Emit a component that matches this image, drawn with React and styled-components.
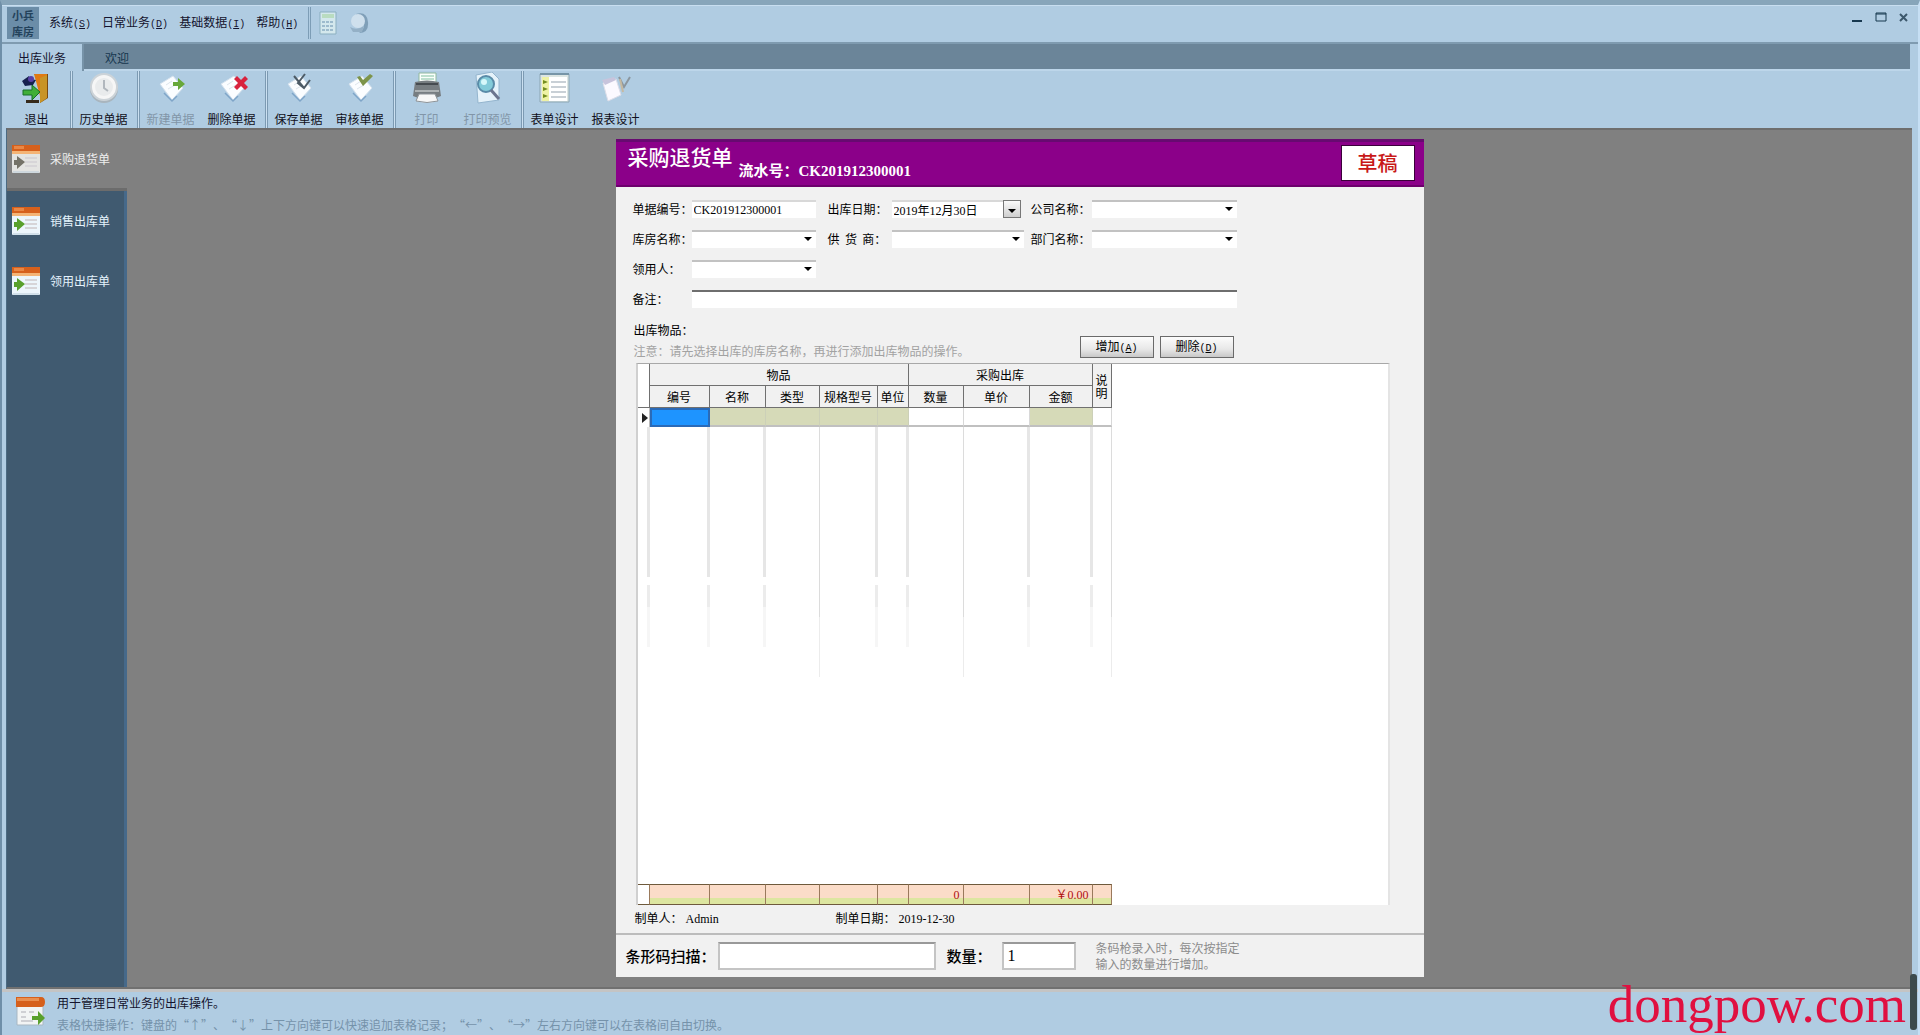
import styled, { createGlobalStyle, css } from 'styled-components';

const cores = {
  frame: '#b0cce2',
  frameDark: '#6b8599',
  side: '#405a70',
  work: '#808080',
  purple: '#8b0089',
  sheet: '#f1f1f1',
  readonly: '#d6dab8',
};

const GlobalStyle = createGlobalStyle`
  * { box-sizing: border-box; }

  body {
    margin: 0;
    font-family: "Noto Sans CJK SC", sans-serif;
    font-size: 12px;
    line-height: 14px;
    color: #000;
    text-spacing-trim: space-all;
  }

  button, input, select {
    font: inherit;
    color: inherit;
    margin: 0;
  }
`;

const Window = styled.div`
  height: 100vh;
  min-height: 700px;
  display: flex;
  flex-direction: column;
  position: relative;
  background: ${cores.frame};
  border-top: 5px solid #87a5ba;
  border-left: 2px solid #6f8fa8;
  border-right: 2px solid #c6dff4;
  overflow: hidden;
`;

const TitleBar = styled.header`
  height: 39px;
  display: flex;
  align-items: center;
  padding: 0 7px 2px 5px;
  border-top: 1px solid #c8def0;
  border-bottom: 2px solid #7f9bb0;
`;

const Logo = styled.div`
  width: 32px;
  height: 32px;
  margin-right: 10px;
  background: #6b8da8;
  color: #24435c;
  font-size: 11px;
  line-height: 16px;
  font-weight: 700;
  text-align: center;
`;

const Menu = styled.nav`
  display: flex;
  gap: 11px;
`;

const MenuButton = styled.button`
  border: none;
  background: none;
  padding: 0;
  color: #14142e;
  cursor: pointer;
`;

const Key = styled.span`
  font-family: "Liberation Mono", monospace;
  font-size: 10px;

  u { text-underline-offset: 1px; }
`;

const MenuTools = styled.div`
  display: flex;
  align-items: center;
  gap: 11px;
  margin-left: 10px;
  padding-left: 8px;
  height: 32px;
  border-left: 3px double #7d9db6;
`;

const IconButton = styled.button`
  border: none;
  background: none;
  padding: 0;
  display: flex;
  cursor: pointer;
`;

const WindowButtons = styled.div`
  display: flex;
  gap: 8px;
  margin-left: auto;
  padding-bottom: 12px;
`;

const TabBar = styled.div`
  height: 27px;
  display: flex;
  background: ${cores.frameDark};
  border-bottom: 2px solid #bdd6ea;
  margin-right: 8px;
`;

const Tab = styled.button`
  border: none;
  background: none;
  padding: 0 16px;
  margin-bottom: -2px;
  color: #16364e;
  cursor: pointer;

  ${(props) => props.$active && css`
    background: ${cores.frame};
    color: #14142e;
    margin-right: 5px;
    border-right: 2px solid #7793a8;
  `}
`;

const ToolBar = styled.div`
  height: 57px;
  display: flex;
  padding-left: 4px;
`;

const ToolGroup = styled.div`
  display: flex;
  padding-right: 3px;
  margin-right: 3px;

  &:not(:last-child) {
    box-shadow: 1px 0 0 #7c9ab2, 2px 0 0 #cbe0f1, 3px 0 0 #7c9ab2;
  }
`;

const ToolButton = styled.button`
  width: 61px;
  height: 57px;
  border: none;
  background: none;
  padding: 1px 0 0;
  display: flex;
  flex-direction: column;
  align-items: center;
  gap: 8px;
  color: #101020;
  cursor: pointer;

  &:disabled { color: #8296a8; }
`;

const Body = styled.div`
  flex: 1;
  min-height: 0;
  display: flex;
  margin: 0 6px 0 4px;
  background: ${cores.work};
  border-top: 2px solid #6e6e6e;
  border-bottom: 2px solid #707070;
  border-left: 1px solid #4b6a82;
`;

const SideBar = styled.aside`
  width: 120px;
  background: ${cores.side};
  border-right: 3px solid #46698a;
`;

const SideItem = styled.button`
  width: 100%;
  height: 60px;
  border: none;
  background: none;
  padding: 0 0 0 4px;
  display: flex;
  align-items: center;
  gap: 9px;
  color: #e4f2fc;
  white-space: nowrap;
  cursor: pointer;

  ${(props) => props.$active && css`
    width: 120px;
    height: 61px;
    background: ${cores.work};
    color: #eee;
    border-bottom: 3px solid #6c6c6c;
  `}
`;

const Work = styled.main`
  flex: 1;
  display: flex;
  justify-content: center;
  padding: 9px 0 10px;
`;

const Sheet = styled.form`
  width: 808px;
  display: flex;
  flex-direction: column;
  background: ${cores.sheet};
`;

const SheetHeader = styled.div`
  height: 48px;
  display: flex;
  background: ${cores.purple};
  border-top: 3px solid #670a70;
  border-bottom: 2px solid #6c006c;
  color: #fff;
  padding: 3px 9px 0 12px;
`;

const SheetTitle = styled.h1`
  margin: 0;
  font-size: 21px;
  line-height: 22px;
  font-weight: 500;
`;

const Serial = styled.div`
  padding: 17px 0 0 6px;
  font-family: "Liberation Serif", "Noto Sans CJK SC", serif;
  font-size: 15px;
  line-height: 18px;
  font-weight: 700;
`;

const Draft = styled.div`
  width: 74px;
  height: 36px;
  margin-left: auto;
  border: 1px solid #3a003a;
  background: #fff;
  color: #c81818;
  font-size: 20px;
  line-height: 34px;
  font-weight: 500;
  text-align: center;
`;

const Fields = styled.div`
  display: grid;
  grid-template-columns: 59px 124px 12px 64px 132px 7px 61px 145px;
  grid-auto-rows: 30px;
  align-items: center;
  padding: 7px 17px 0;
`;

const Label = styled.label`
  grid-column: ${(props) => props.$col};
  white-space: pre;
`;

const inputBox = css`
  width: 100%;
  height: 18px;
  border: none;
  border-top: 2px solid #c2c2c2;
  border-radius: 0;
  background: #fff;
  outline: none;
`;

const Input = styled.input`
  ${inputBox};
  grid-column: ${(props) => props.$col};
  padding: 0 2px;
  font-family: "Liberation Serif", "Noto Sans CJK SC", serif;
  border-top-color: ${(props) => (props.$dark ? '#6e6e6e' : '#d8d8d8')};
`;

const ComboBox = styled.div`
  grid-column: ${(props) => props.$col};
  display: grid;
  align-items: center;

  > * { grid-area: 1 / 1; }

  svg {
    justify-self: end;
    margin-right: 4px;
    pointer-events: none;
  }
`;

const Select = styled.select`
  ${inputBox};
  appearance: none;
`;

const DateBox = styled.div`
  display: flex;
  padding-right: 3px;
`;

const DateButton = styled.button`
  width: 18px;
  height: 18px;
  flex: none;
  border: 1px solid #777;
  background: linear-gradient(#fafafa, #cfcfcf);
  padding: 3px 0 0;
  display: flex;
  align-items: center;
  justify-content: center;
`;

const ItemsBar = styled.div`
  height: 49px;
  display: flex;
  justify-content: space-between;
  align-items: flex-end;
  padding: 0 190px 5px 18px;
`;

const ItemsTitle = styled.div`
  display: flex;
  flex-direction: column;
  gap: 7px;

  p {
    margin: 0;
    color: #a2a2a2;
  }
`;

const Actions = styled.div`
  display: flex;
  gap: 6px;
`;

const ActionButton = styled.button`
  width: 74px;
  height: 22px;
  padding: 0;
  border: 1px solid #6a6a6a;
  background: linear-gradient(#fcfcfc, #e8e8e8 60%, #c8c8c8);
  cursor: pointer;
`;

const GridPanel = styled.div`
  flex: 1;
  min-height: 0;
  margin: 0 34px 0 20px;
  background: #fff;
  border-left: 2px solid #d0d0d0;
  border-right: 2px solid #e4e4e4;
  border-top: 1px solid #a8a8a8;
`;

const Grid = styled.table`
  width: 474px;
  height: 100%;
  table-layout: fixed;
  border-collapse: separate;
  border-spacing: 0;

  th, td {
    padding: 0;
    font-weight: 400;
    white-space: nowrap;
  }

  th {
    height: 22px;
    background: #f1f1f1;
    border-right: 1px solid #707070;
    border-bottom: 1px solid #707070;
    text-align: center;
  }

  th:first-child[rowspan] { background: #fff; }
`;

const NoteHead = styled.span`
  display: block;
  width: 12px;
  margin: 0 auto;
  line-height: 13px;
  white-space: normal;
`;

const Cell = styled.td`
  height: 19px;
  background: ${(props) => (props.$readonly ? cores.readonly : '#fff')};
  border-right: 1px solid ${(props) => (props.$readonly ? '#ccd0b8' : '#d8d8d8')};
  border-bottom: 2px solid #c0c0c0;

  ${(props) => props.$selected && css`
    background: #1e94ff;
    border: 2px solid #2a6ab8;
  `}
`;

const Mark = styled.td`
  border-right: 1px solid #bbb;

  svg { display: block; margin-left: 4px; }
`;

// coluna vazia: a linha da grade some antes do fim
const EmptyCell = styled.td`
  background: linear-gradient(#e6e6e6 0 150px, #fff 150px 158px, #ececec 158px 180px, #f6f6f6 180px 220px, #fff 220px) right / 3px 100% no-repeat;

  ${(props) => props.$long && css`
    background: linear-gradient(#dcdcdc 0 190px, #ececec 190px 250px, #fff 250px) right / 1px 100% no-repeat;
  `}
`;

const Total = styled.td`
  height: 21px;
  border-top: 1px solid #6e5a3c;
  border-bottom: 1px solid #6e5a3c;
  border-right: 1px solid #9a7a5c;
  background: linear-gradient(#fbdcc8 0 13px, #dde6a0 13px);
  color: #b01010;
  text-align: right;
  font-family: "Liberation Serif", "Noto Sans CJK SC", serif;

  && { padding-right: 3px; }

  ${(props) => props.$blank && css`background: #fff;`}
`;

const Author = styled.div`
  height: 28px;
  display: flex;
  align-items: center;
  padding: 0 19px;
  font-family: "Liberation Serif", "Noto Sans CJK SC", serif;

  span { width: 201px; }
`;

const ScanBar = styled.div`
  height: 44px;
  display: flex;
  align-items: center;
  padding: 0 10px;
  border-top: 2px solid #bcbcbc;
  font-size: 15px;

  label { font-weight: 500; white-space: nowrap; }

  p {
    margin: 0 0 0 20px;
    color: #8c8c8c;
    font-size: 12px;
    line-height: 16px;
  }
`;

const ScanInput = styled.input`
  width: ${(props) => props.$width}px;
  height: 28px;
  padding: 0 4px;
  margin: 0 11px 0 2px;
  border: 2px solid #c4c4c4;
  border-top-color: #999;
  background: #fff;
  font-family: "Liberation Serif", serif;
  font-size: 16px;

  &:last-of-type { margin: 0 0 0 10px; }
`;

const StatusBar = styled.footer`
  height: 46px;
  display: flex;
  gap: 11px;
  padding: 3px 0 0 12px;
  border-top: 3px solid #c4c4c4;
  color: #14142e;

  p { margin: 0; line-height: 22px; white-space: nowrap; }
  p:first-child { margin-top: -3px; }
  p:last-child { color: #7592aa; }
`;

const WaterMark = styled.div`
  position: absolute;
  right: 12px;
  bottom: 5px;
  font-family: "Liberation Serif", serif;
  font-size: 53px;
  line-height: 52px;
  color: #e01040;
`;

const ScrollMark = styled.div`
  position: absolute;
  right: 1px;
  bottom: 5px;
  width: 7px;
  height: 56px;
  border-radius: 3px;
  background: #3c4a4c;
`;

const Arrow = () => (
  <svg width="8" height="4" viewBox="0 0 8 4"><path d="M0 0h8L4 4z" fill="#000" /></svg>
);

const Note = () => (
  <>
    <path d="M5 12l13-8 10 12-11 12z" fill="#fbfdff" stroke="#d5e2ee" />
    <path d="M9 21l8 8 5-5" fill="none" stroke="#7fa5c8" strokeWidth="1.5" />
    <path d="M11 13l6-4M13 17l7-4" stroke="#dde5ec" />
  </>
);

const icons = {
  exit: (
    <>
      <path d="M13 2h14v24l-8 5V8z" fill="#7b4a10" />
      <path d="M13 2h13v22h-7z" fill="#e07a12" />
      <path d="M19 6l7-3v23l-7 5z" fill="#c89426" />
      <path d="M1 9l7-5 1 3 6 1-3 5-8 1z" fill="#17204e" />
      <circle cx="10" cy="7" r="3" fill="#5740a6" />
      <path d="M2 18h9v-5l8 7-8 8v-5H2z" fill="#40ae38" stroke="#176e28" />
      <path d="M5 28h13v3H5z" fill="#352a1c" />
    </>
  ),
  history: (
    <>
      <circle cx="16" cy="17" r="14" fill="#a9b5be" />
      <circle cx="16" cy="15" r="13" fill="#f6f6f6" stroke="#ccd3d8" strokeWidth="2" />
      <circle cx="16" cy="15" r="9" fill="#e9ebec" />
      <path d="M16 8v8l4 3" fill="none" stroke="#b1b7bd" strokeWidth="2" />
    </>
  ),
  add: (
    <>
      <Note />
      <path d="M18 10h5V6l7 6-7 6v-4h-5z" fill="#68a83a" />
    </>
  ),
  remove: (
    <>
      <Note />
      <path d="M18 7l3-3 4 4 4-4 3 3-4 4 4 4-3 3-4-4-4 4-3-3 4-4z" fill="#d8233e" />
    </>
  ),
  save: (
    <>
      <Note />
      <path d="M11 4l10 12M22 2l-7 9 6 5 6-8" fill="none" stroke="#4d5b66" strokeWidth="2" />
    </>
  ),
  check: (
    <>
      <Note />
      <path d="M13 5l6 9L29 4l-3-2-7 6-3-4z" fill="#7d9449" />
    </>
  ),
  print: (
    <>
      <path d="M8 1h17v11H8z" fill="#fafffb" stroke="#90b89e" />
      <path d="M10 4h13M10 7h13" stroke="#81bfa0" />
      <path d="M4 10q12-3 24 0l2 14q-14 7-28 0z" fill="#777d81" />
      <path d="M5 12h22" stroke="#464b50" strokeWidth="2" />
      <path d="M4 19h24" stroke="#adb2b4" strokeWidth="2" />
      <path d="M8 22h16l3 7q-11 3-22 0z" fill="#f7f7f7" stroke="#8d9398" />
    </>
  ),
  preview: (
    <>
      <path d="M4 3l16-3 7 7v21L6 31z" fill="#e5f2fa" stroke="#94b5ce" />
      <circle cx="14" cy="12" r="8" fill="#83cbd9" stroke="#598ba8" strokeWidth="2" />
      <circle cx="12" cy="10" r="3" fill="#d6f8fa" />
      <path d="M19 18l8 9" stroke="#6b758e" strokeWidth="3" />
    </>
  ),
  form: (
    <>
      <path d="M1 2h29v28H1z" fill="#dce5e3" stroke="#8ca6b4" />
      <path d="M3 5h25v24H3z" fill="#fff" />
      <path d="M3 5h7v24H3z" fill="#eef2a5" />
      <path d="M12 10h15M12 15h15M12 20h15M12 25h15" stroke="#c9d0d6" strokeWidth="2" />
      <path d="M4 8l5 2-5 2zM4 15l5 2-5 2zM4 22l5 2-5 2z" fill="#738c20" />
      <path d="M1 2h29" stroke="#7795a7" strokeWidth="2" />
    </>
  ),
  report: (
    <>
      <path d="M3 11l13-4 5 16-13 6z" fill="#fbf9ff" stroke="#dcdde8" />
      <path d="M2 8l12-3 2 3-11 5z" fill="#c8c4dc" />
      <path d="M19 5l5 10 6-10" fill="none" stroke="#8b969f" strokeWidth="2" />
      <path d="M20 7l3 13" stroke="#c6b9a0" strokeWidth="2" />
    </>
  ),
};

const ToolIcon = ({ name }) => (
  <svg width="32" height="32" viewBox="0 0 32 32">{icons[name]}</svg>
);

const DocIcon = ({ gray }) => (
  <svg width="30" height="30" viewBox="0 0 30 30">
    <rect x="1" y="1" width="28" height="28" rx="1" fill={gray ? '#e4e4e2' : '#edf6fc'} />
    <path d="M1 1h28v7H1z" fill="#d6601c" />
    <path d="M1 7h28v3H1z" fill="#f4b476" />
    <path d="M3 2h10v3H3z" fill="#e98745" />
    <path d="M14 14h12M14 18h12M14 22h12" stroke="#d7d5d8" strokeWidth="2" />
    <path d="M3 16h3v-4l8 6-8 7v-4H3z" fill={gray ? '#747268' : '#59a02c'} />
    <path d="M2 28h26" stroke="#b8cbd9" />
  </svg>
);

const StatusIcon = () => (
  <svg width="32" height="34" viewBox="0 0 32 34">
    <path d="M3 3h26v27H3z" fill="#f2f4f4" stroke="#a8b7c2" />
    <path d="M2 2h25q4 0 4 5t-4 5H2z" fill="#d6601c" />
    <path d="M3 3h22v3H3z" fill="#ea8f50" />
    <path d="M7 17h5M15 17h5M7 22h5M7 26h12" stroke="#cfd0d4" strokeWidth="2" />
    <path d="M18 21h6v-5l7 7-7 7v-5h-6z" fill="#59a02c" />
  </svg>
);

const menus = [
  ['系统', 'S'],
  ['日常业务', 'D'],
  ['基础数据', 'I'],
  ['帮助', 'H'],
];

const toolGroups = [
  [['退出', 'exit']],
  [['历史单据', 'history']],
  [['新建单据', 'add', true], ['删除单据', 'remove']],
  [['保存单据', 'save'], ['审核单据', 'check']],
  [['打印', 'print', true], ['打印预览', 'preview', true]],
  [['表单设计', 'form'], ['报表设计', 'report']],
];

const sideItems = ['采购退货单', '销售出库单', '领用出库单'];

const columns = [
  { title: '编号', width: 60, selected: true },
  { title: '名称', width: 56, readonly: true },
  { title: '类型', width: 54, readonly: true, long: true },
  { title: '规格型号', width: 58, readonly: true },
  { title: '单位', width: 31, readonly: true },
  { title: '数量', width: 55, total: '0', long: true },
  { title: '单价', width: 66 },
  { title: '金额', width: 63, readonly: true, total: '￥0.00' },
];

const Hotkey = ({ k }) => <Key>(<u>{k}</u>)</Key>;

const Combo = ({ id, label, col }) => (
  <>
    <Label htmlFor={id} $col={col}>{label}</Label>
    <ComboBox $col={col + 1}>
      <Select id={id} />
      <Arrow />
    </ComboBox>
  </>
);

const ItemsGrid = () => (
  <Grid>
    <colgroup>
      <col style={{ width: 12 }} />
      {columns.map((c) => <col key={c.title} style={{ width: c.width }} />)}
      <col />
    </colgroup>
    <thead>
      <tr>
        <th rowSpan={2} />
        <th colSpan={5}>物品</th>
        <th colSpan={3}>采购出库</th>
        <th rowSpan={2}><NoteHead>说明</NoteHead></th>
      </tr>
      <tr>
        {columns.map((c) => <th key={c.title}>{c.title}</th>)}
      </tr>
    </thead>
    <tbody>
      <tr>
        <Mark><svg width="6" height="10" viewBox="0 0 6 10"><path d="M0 0l6 5-6 5z" fill="#222" /></svg></Mark>
        {columns.map((c) => <Cell key={c.title} $readonly={c.readonly} $selected={c.selected} />)}
        <Cell />
      </tr>
      <tr>
        <EmptyCell />
        {columns.map((c) => <EmptyCell key={c.title} $long={c.long} />)}
        <EmptyCell $long />
      </tr>
    </tbody>
    <tfoot>
      <tr>
        <Total $blank />
        {columns.map((c) => <Total key={c.title}>{c.total}</Total>)}
        <Total />
      </tr>
    </tfoot>
  </Grid>
);

const App = () => {
  return (
    <Window>
      <GlobalStyle />

      <TitleBar>
        <Logo>小兵<br />库房</Logo>
        <Menu>
          {menus.map(([name, key]) => (
            <MenuButton key={key}>{name}<Hotkey k={key} /></MenuButton>
          ))}
        </Menu>
        <MenuTools>
          <IconButton aria-label="计算器">
            <svg width="18" height="24" viewBox="0 0 18 24">
              <path d="M1 1h16v22H1z" fill="#d4e8ed" stroke="#8bafc0" />
              <path d="M3 3h12v4H3z" fill="#b9dcc0" />
              <path d="M3 11h12M3 15h12M3 19h12" stroke="#9dbbcd" strokeWidth="2" strokeDasharray="3 1" />
            </svg>
          </IconButton>
          <IconButton aria-label="注销">
            <svg width="22" height="22" viewBox="0 0 22 22">
              <path d="M8 2q11-3 12 8t-9 11q7-5 4-10T8 2z" fill="#7f9fb8" />
              <circle cx="10" cy="9" r="7" fill="#cfe0ed" />
              <path d="M2 15q7 4 14-1l-2 6H5z" fill="#94b0c6" />
            </svg>
          </IconButton>
        </MenuTools>
        <WindowButtons>
          <IconButton aria-label="最小化">
            <svg width="16" height="12"><path d="M3 10h10" stroke="#17384f" strokeWidth="2" /></svg>
          </IconButton>
          <IconButton aria-label="最大化">
            <svg width="16" height="12"><path d="M3 2h10v8H3zM3 3h10" fill="none" stroke="#17384f" strokeWidth="1" /></svg>
          </IconButton>
          <IconButton aria-label="关闭">
            <svg width="14" height="12"><path d="M3 3l7 7M10 3l-7 7" stroke="#3c586c" strokeWidth="2" /></svg>
          </IconButton>
        </WindowButtons>
      </TitleBar>

      <TabBar>
        <Tab $active>出库业务</Tab>
        <Tab>欢迎</Tab>
      </TabBar>

      <ToolBar>
        {toolGroups.map((group, index) => (
          <ToolGroup key={index}>
            {group.map(([name, icon, disabled]) => (
              <ToolButton key={name} disabled={disabled}>
                <ToolIcon name={icon} />
                {name}
              </ToolButton>
            ))}
          </ToolGroup>
        ))}
      </ToolBar>

      <Body>
        <SideBar>
          {sideItems.map((name, index) => (
            <SideItem key={name} $active={index === 0}>
              <DocIcon gray={index === 0} />
              {name}
            </SideItem>
          ))}
        </SideBar>

        <Work>
          <Sheet onSubmit={(e) => e.preventDefault()}>
            <SheetHeader>
              <SheetTitle>采购退货单</SheetTitle>
              <Serial>流水号：CK201912300001</Serial>
              <Draft>草稿</Draft>
            </SheetHeader>

            <Fields>
              <Label htmlFor="code" $col={1}>单据编号：</Label>
              <Input id="code" $col={2} defaultValue="CK201912300001" />
              <Label htmlFor="date" $col={4}>出库日期：</Label>
              <DateBox>
                <Input id="date" defaultValue="2019年12月30日" />
                <DateButton type="button" aria-label="选择日期"><Arrow /></DateButton>
              </DateBox>
              <Combo id="company" label="公司名称：" col={7} />

              <Combo id="store" label="库房名称：" col={1} />
              <Combo id="supplier" label="供  货  商：" col={4} />
              <Combo id="dept" label="部门名称：" col={7} />

              <Combo id="user" label="领用人：" col={1} />

              <Label htmlFor="remark" $col={1}>备注：</Label>
              <Input id="remark" $col="2 / 9" $dark />
            </Fields>

            <ItemsBar>
              <ItemsTitle>
                出库物品：
                <p>注意：请先选择出库的库房名称，再进行添加出库物品的操作。</p>
              </ItemsTitle>
              <Actions>
                <ActionButton type="button">增加<Hotkey k="A" /></ActionButton>
                <ActionButton type="button">删除<Hotkey k="D" /></ActionButton>
              </Actions>
            </ItemsBar>

            <GridPanel>
              <ItemsGrid />
            </GridPanel>

            <Author>
              <span>制单人： Admin</span>
              <span>制单日期： 2019-12-30</span>
            </Author>

            <ScanBar>
              <label htmlFor="barcode">条形码扫描：</label>
              <ScanInput id="barcode" $width={218} />
              <label htmlFor="qty">数量：</label>
              <ScanInput id="qty" $width={74} defaultValue="1" />
              <p>条码枪录入时，每次按指定<br />输入的数量进行增加。</p>
            </ScanBar>
          </Sheet>
        </Work>
      </Body>

      <StatusBar>
        <StatusIcon />
        <div>
          <p>用于管理日常业务的出库操作。</p>
          <p>表格快捷操作：键盘的“↑”、“↓”上下方向键可以快速追加表格记录；“←”、“→”左右方向键可以在表格间自由切换。</p>
        </div>
      </StatusBar>

      <WaterMark>dongpow.com</WaterMark>
      <ScrollMark />
    </Window>
  );
};

export default App;
